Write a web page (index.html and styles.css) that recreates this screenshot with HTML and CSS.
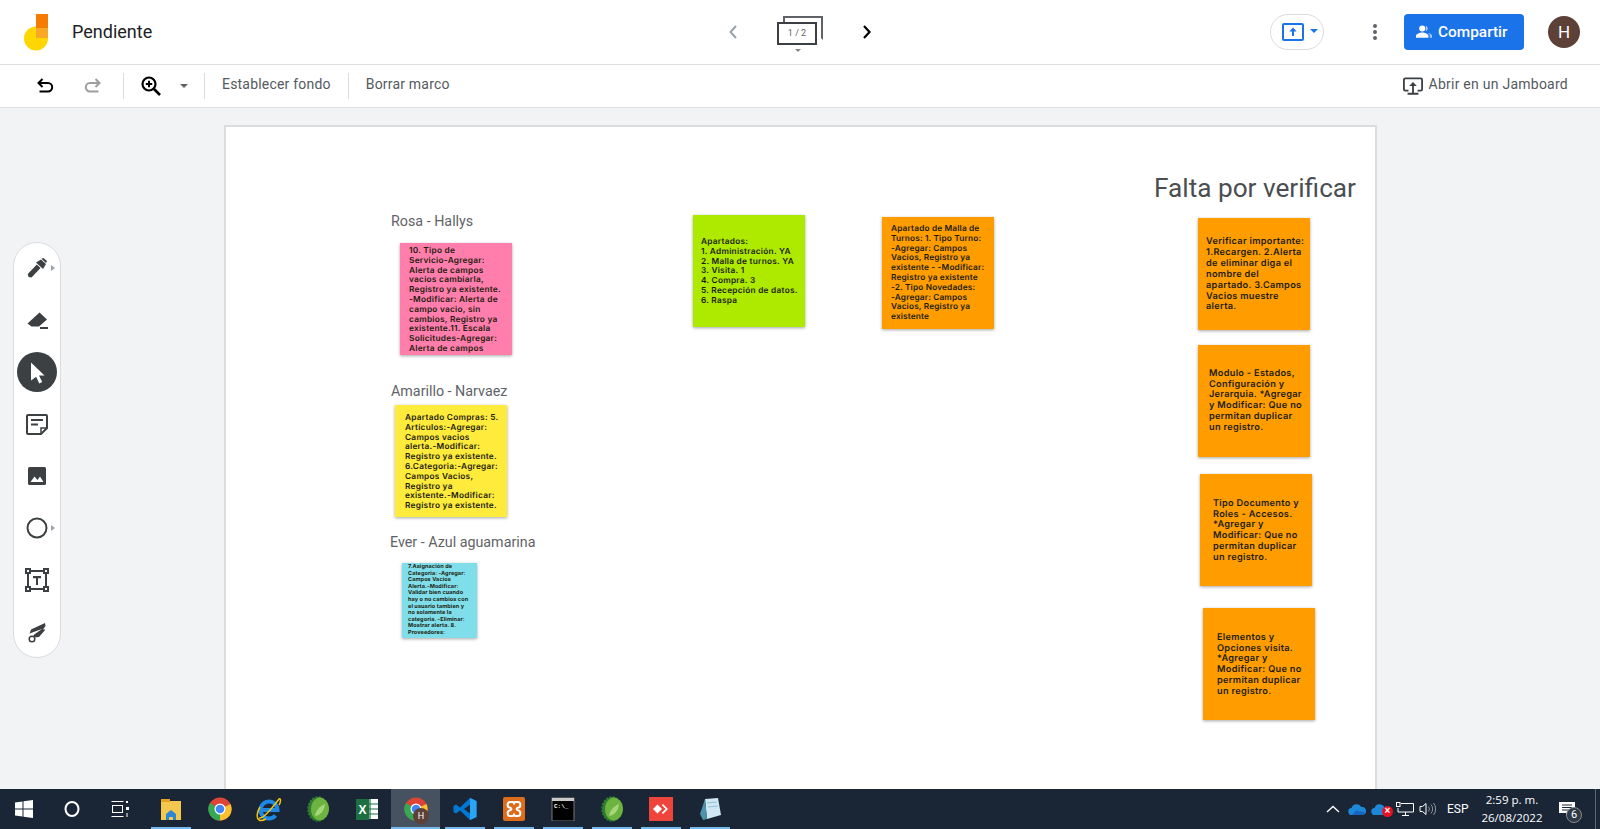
FILE: index.html
```html
<!DOCTYPE html>
<html lang="es">
<head>
<meta charset="utf-8">
<title>Pendiente - Jamboard</title>
<link rel="stylesheet" href="styles.css">
</head>
<body>
<div class="app">
  <header class="topbar">
    <svg class="logo" width="24" height="37" viewBox="0 0 24 37"><circle cx="12" cy="24.5" r="12" fill="#ffd600"/><rect x="12" y="0" width="12" height="14" fill="#f57c00"/><rect x="12" y="14" width="12" height="10" fill="#f9a825"/></svg>
    <div class="doc-title">Pendiente</div>
    <div class="pager">
      <svg class="pg-chev" width="12" height="16" viewBox="0 0 12 16"><path d="M9 2 3.500 8 9 14" fill="none" stroke="#9aa0a6" stroke-width="2"/></svg>
      <div class="stack">
        <div class="stack-back"></div>
        <div class="stack-front">1 / 2</div>
        <div class="stack-caret"></div>
      </div>
      <svg class="pg-chev" width="12" height="16" viewBox="0 0 12 16"><path d="M3 2 8.500 8 3 14" fill="none" stroke="#000" stroke-width="2.200"/></svg>
    </div>
    <div class="top-right">
      <div class="present">
        <svg width="22" height="18" viewBox="0 0 22 18"><rect x="1" y="1" width="20" height="16" rx="1" fill="none" stroke="#1a73e8" stroke-width="2"/><path d="M11 4.500 7.300 8.500H10V13h2V8.500h2.700z" fill="#1a73e8"/></svg>
        <span class="present-caret"></span>
      </div>
      <svg class="kebab" width="4" height="16" viewBox="0 0 4 16"><circle cx="2" cy="2" r="2" fill="#5f6368"/><circle cx="2" cy="8" r="2" fill="#5f6368"/><circle cx="2" cy="14" r="2" fill="#5f6368"/></svg>
      <button class="share">
        <svg width="16" height="13" viewBox="0 0 18 14"><circle cx="7" cy="3.600" r="3.400" fill="#fff"/><path d="M0 14v-2c0-2.600 4.400-4 7-4s7 1.400 7 4v2z" fill="#fff"/><path d="M11 .4a3.400 3.400 0 0 1 0 6.400zM13 8.300c2.400.4 5 1.600 5 3.700v2h-2.500v-2.500c0-1.300-1.100-2.400-2.500-3.200z" fill="#a8c7fa"/></svg>
        <span>Compartir</span>
      </button>
      <div class="avatar">H</div>
    </div>
  </header>

  <div class="toolbar">
    <svg class="tb-undo" width="24" height="24" viewBox="0 0 24 24"><path d="M9.500 5 5.500 9l4 4M5.500 9H15a4.200 4.200 0 0 1 0 8.400H6.500" fill="none" stroke="#000" stroke-width="2"/></svg>
    <svg class="tb-redo" width="24" height="24" viewBox="0 0 24 24"><path d="M14.500 5l4 4-4 4M18.500 9H9a4.200 4.200 0 0 0 0 8.400h8.500" fill="none" stroke="#9e9e9e" stroke-width="2"/></svg>
    <div class="tb-sep tb-sep-1"></div>
    <svg class="tb-zoom" width="24" height="24" viewBox="0 0 24 24"><circle cx="10" cy="10" r="6.500" fill="none" stroke="#000" stroke-width="2.200"/><path d="M15 15l6 6" stroke="#000" stroke-width="2.600"/><path d="M10 6.800v6.400M6.800 10h6.400" stroke="#000" stroke-width="2"/></svg>
    <span class="tb-caret"></span>
    <div class="tb-sep tb-sep-2"></div>
    <div class="tb-text">Establecer fondo</div>
    <div class="tb-sep tb-sep-3"></div>
    <div class="tb-text">Borrar marco</div>
    <div class="open-in">
      <svg width="20" height="19" viewBox="0 0 22 20"><path d="M6 14.500H2.500a1.500 1.500 0 0 1-1.500-1.500V2.500A1.500 1.500 0 0 1 2.500 1h17A1.500 1.500 0 0 1 21 2.500V13a1.500 1.500 0 0 1-1.500 1.500H16" fill="none" stroke="#3c4043" stroke-width="2"/><path d="M11 5 6.800 9.500H10V17H5v2h12v-2h-5V9.500h3.200z" fill="#3c4043"/></svg>
      <span>Abrir en un Jamboard</span>
    </div>
  </div>

  <main class="stage">
    <div class="canvas">
      <div class="label label-rosa">Rosa - Hallys</div>
      <div class="note note-pink">10. Tipo de<br>Servicio-Agregar:<br>Alerta de campos<br>vacios cambiarla,<br>Registro ya existente.<br>-Modificar: Alerta de<br>campo vacio, sin<br>cambios, Registro ya<br>existente.11. Escala<br>Solicitudes-Agregar:<br>Alerta de campos</div>
      <div class="label label-amarillo">Amarillo - Narvaez</div>
      <div class="note note-yellow">Apartado Compras: 5.<br>Articulos:-Agregar:<br>Campos vacios<br>alerta.-Modificar:<br>Registro ya existente.<br>6.Categoria:-Agregar:<br>Campos Vacios,<br>Registro ya<br>existente.-Modificar:<br>Registro ya existente.</div>
      <div class="label label-ever">Ever - Azul aguamarina</div>
      <div class="note note-cyan">7.Asignación de<br>Categoria: -Agregar:<br>Campos Vacios<br>Alerta.-Modificar:<br>Validar bien cuando<br>hay o no cambios con<br>el usuario tambien y<br>no solamente la<br>categoria. -Eliminar:<br>Mostrar alerta. 8.<br>Proveedores:</div>
      <div class="note note-green">Apartados:<br>1. Administración. YA<br>2. Malla de turnos. YA<br>3. Visita. 1<br>4. Compra. 3<br>5. Recepción de datos.<br>6. Raspa</div>
      <div class="note note-orange note-malla">Apartado de Malla de<br>Turnos: 1. Tipo Turno:<br>-Agregar: Campos<br>Vacios, Registro ya<br>existente - -Modificar:<br>Registro ya existente<br>-2. Tipo Novedades:<br>-Agregar: Campos<br>Vacios, Registro ya<br>existente</div>
      <div class="heading">Falta por verificar</div>
      <div class="note note-orange note-big note-verificar">Verificar importante:<br>1.Recargen. 2.Alerta<br>de eliminar diga el<br>nombre del<br>apartado. 3.Campos<br>Vacios muestre<br>alerta.</div>
      <div class="note note-orange note-big note-modulo">Modulo - Estados,<br>Configuración y<br>Jerarquia. *Agregar<br>y Modificar: Que no<br>permitan duplicar<br>un registro.</div>
      <div class="note note-orange note-big note-tipo">Tipo Documento y<br>Roles - Accesos.<br>*Agregar y<br>Modificar: Que no<br>permitan duplicar<br>un registro.</div>
      <div class="note note-orange note-big note-elementos">Elementos y<br>Opciones visita.<br>*Agregar y<br>Modificar: Que no<br>permitan duplicar<br>un registro.</div>
    </div>

    <nav class="rail">
      <div class="tool">
        <svg width="24" height="24" viewBox="0 0 24 24"><path d="M3.500 21 2.800 18l9-9.500 3.700 3.500-9 9.500z" fill="#3c4043"/><path d="M11 6.500 16 3.500l5 4.500-3 5z" fill="#3c4043"/><path d="M16.500 2.800l2-.8 3.500 3-1 2z" fill="#3c4043"/></svg>
        <span class="tool-more"></span>
      </div>
      <div class="tool">
        <svg width="24" height="24" viewBox="0 0 24 24"><path d="M15.500 3.500 23 10.500 15 17.500H7.500L3.500 14.500z" fill="#3c4043" transform="translate(-1 1)"/><rect x="15" y="19" width="8" height="2" fill="#3c4043"/></svg>
      </div>
      <div class="tool tool-active">
        <svg width="24" height="24" viewBox="0 0 24 24"><path d="M6 2.500 19.500 15.500H14l3.200 6.500-3 1.400-3-6.700L6 20.500z" fill="#fff"/></svg>
      </div>
      <div class="tool">
        <svg width="24" height="24" viewBox="0 0 24 24"><path d="M3 3h18a1 1 0 0 1 1 1v12l-6 6H3a1 1 0 0 1-1-1V4a1 1 0 0 1 1-1z" fill="none" stroke="#3c4043" stroke-width="2"/><path d="M6 8h12M6 12.500h7" stroke="#3c4043" stroke-width="2"/><path d="M16 21v-5h5.500" fill="none" stroke="#3c4043" stroke-width="1.500"/></svg>
      </div>
      <div class="tool">
        <svg width="24" height="24" viewBox="0 0 24 24"><rect x="3" y="3" width="18" height="18" rx="1.500" fill="#3c4043"/><path d="M5.500 18 9.500 12.500l3 3.500 2.500-3.500 3.500 5.500z" fill="#fff"/></svg>
      </div>
      <div class="tool">
        <svg width="24" height="24" viewBox="0 0 24 24"><circle cx="12" cy="12" r="9.500" fill="none" stroke="#3c4043" stroke-width="2"/></svg>
        <span class="tool-more"></span>
      </div>
      <div class="tool">
        <svg width="24" height="24" viewBox="0 0 24 24"><path d="M3 3h18v18H3z" fill="none" stroke="#3c4043" stroke-width="2"/><g fill="#fff" stroke="#3c4043" stroke-width="2"><rect x="1" y="1" width="4" height="4"/><rect x="19" y="1" width="4" height="4"/><rect x="1" y="19" width="4" height="4"/><rect x="19" y="19" width="4" height="4"/></g><path d="M8 8h8v2.200h-3V17h-2v-6.800H8z" fill="#3c4043"/></svg>
      </div>
      <div class="tool">
        <svg width="24" height="24" viewBox="0 0 24 24"><path d="M20 3 6 9.500 4.500 13.500 17 9 8.500 15 9 17.500 14 17 20.500 9.500 18 9.500 20.500 6z" fill="#3c4043"/><circle cx="7" cy="19" r="2.800" fill="#fff" stroke="#3c4043" stroke-width="1.500"/></svg>
      </div>
    </nav>
  </main>

  <footer class="taskbar">
    <div class="tb-sys">
      <svg width="18" height="18" viewBox="0 0 18 18"><path d="M0 2.500 7.500 1.400V8.500H0zM8.500 1.300 18 0v8.500H8.500zM0 9.500H7.500V16.600L0 15.500zM8.500 9.500H18V18L8.500 16.700z" fill="#fff"/></svg>
    </div>
    <div class="tb-sys">
      <svg width="18" height="18" viewBox="0 0 18 18"><ellipse cx="9" cy="9" rx="6.500" ry="7" fill="none" stroke="#fff" stroke-width="2"/></svg>
    </div>
    <div class="tb-sys">
      <svg width="18" height="18" viewBox="0 0 18 18"><g fill="none" stroke="#fff"><path d="M.5 1.500h12M.5 16.500h12"/><rect x="1.500" y="5.500" width="10" height="7"/></g><g fill="#fff"><rect x="15" y="1" width="2" height="2"/><rect x="15" y="7" width="3" height="3"/><rect x="15.500" y="13" width="1" height="4"/></g></svg>
    </div>
    <div class="apps">
      <div class="app-item app-open">
        <svg width="24" height="24" viewBox="0 0 24 24"><path d="M2 2h8l1 2h11v19H2z" fill="#f4c74f"/><rect x="2" y="2" width="9" height="3" fill="#e5a320"/><path d="M7 23v-6h10v6h-3v-3h-4v3z" fill="#2b87d3"/><path d="M7 17l5-4 5 4z" fill="#2b87d3"/></svg>
      </div>
      <div class="app-item">
        <svg width="24" height="24" viewBox="0 0 24 24"><circle cx="12" cy="12" r="11.500" fill="#db4437"/><path d="M12 12 22.500 7A11.500 11.500 0 0 1 12 23.500z" fill="#fbc02d"/><path d="M12 12 12 23.500A11.500 11.500 0 0 1 2 6z" fill="#34a853"/><circle cx="12" cy="12" r="5.500" fill="#fff"/><circle cx="12" cy="12" r="4.300" fill="#4285f4"/></svg>
      </div>
      <div class="app-item">
        <svg width="26" height="26" viewBox="0 0 26 26"><path d="M4.500 14H21.500A8.500 8.500 0 1 0 19.500 19.500" fill="none" stroke="#1e88e5" stroke-width="4"/><path d="M3 22C6 23 14 15 23 3 25 2 25 6 23 9" fill="none" stroke="#f1c40f" stroke-width="1.500"/><path d="M4 11C1 16 0 22 3 24 5 25 8 24 10 23" fill="none" stroke="#f1c40f" stroke-width="1.500"/></svg>
      </div>
      <div class="app-item">
        <svg width="24" height="26" viewBox="0 0 24 26"><ellipse cx="12" cy="13" rx="10" ry="12" fill="#2e7d32" stroke="#2e7d32" stroke-width="1.500" stroke-dasharray="2 1.500"/><path d="M14 1.500c6 1 9 6 9 11.500s-4 11-9 11.500c-5 0-9-5-9-11.500S9 2 14 1.500z" fill="#6db33f"/><path d="M9 20c1-6 5-10 10-12-1 7-4 11-10 12z" fill="#a5d67a"/></svg>
      </div>
      <div class="app-item">
        <svg width="24" height="24" viewBox="0 0 24 24"><rect x="8" y="2" width="15" height="20" fill="#fff"/><path d="M15 2v20M8 7h15M8 12h15M8 17h15" stroke="#1d6f42" stroke-width="1.200"/><rect x="1" y="2" width="13" height="21" fill="#1d6f42"/><text class="xl-glyph" x="7.500" y="17" text-anchor="middle">X</text></svg>
      </div>
      <div class="app-item app-active app-open">
        <svg width="24" height="24" viewBox="0 0 24 24"><circle cx="12" cy="12" r="11.500" fill="#db4437"/><path d="M12 12 22.500 7A11.500 11.500 0 0 1 12 23.500z" fill="#fbc02d"/><path d="M12 12 12 23.500A11.500 11.500 0 0 1 2 6z" fill="#34a853"/><circle cx="12" cy="12" r="5.500" fill="#fff"/><circle cx="12" cy="12" r="4.300" fill="#4285f4"/></svg>
        <span class="chrome-badge">H</span>
      </div>
      <div class="app-item app-open">
        <svg width="24" height="24" viewBox="0 0 24 24"><path d="M17 1 23.500 4v16L17 23 7 13.500l-4 3-2.500-1.500v-6L3 7.500l4 3z" fill="#0078d4"/><path d="M17 1 23.500 4v16L17 23z" fill="#2aa4f4"/><path d="M17 7.500 11 12l6 4.500z" fill="#1a2636"/></svg>
      </div>
      <div class="app-item app-open">
        <svg width="24" height="24" viewBox="0 0 24 24"><rect x="1" y="0" width="22" height="24" rx="2" fill="#dc6d1c"/><path d="M8 5h2.500c1 0 1.500 1.500 1.500 2.500C12 6.500 12.500 5 13.500 5H16c3 0 3 5 .5 5.500-1 .2-2 .5-2 1.500s1 1.300 2 1.500c2.500.5 2.500 5.500-.5 5.500h-2.500c-1 0-1.500-1.500-1.500-2.500 0 1-.5 2.500-1.500 2.500H8c-3 0-3-5-.5-5.500 1-.2 2-.5 2-1.500s-1-1.300-2-1.500C5 10 5 5 8 5z" fill="none" stroke="#fff" stroke-width="2"/></svg>
      </div>
      <div class="app-item app-open">
        <svg width="24" height="24" viewBox="0 0 24 24"><rect x="1" y="1" width="22" height="23" fill="#000" stroke="#777"/><rect x="1" y="1" width="22" height="3" fill="#c9c9c9"/><text class="cmd-glyph" x="3" y="11">C:\_</text></svg>
      </div>
      <div class="app-item app-open">
        <svg width="24" height="26" viewBox="0 0 24 26"><ellipse cx="12" cy="13" rx="10" ry="12" fill="#2e7d32" stroke="#2e7d32" stroke-width="1.500" stroke-dasharray="2 1.500"/><path d="M14 1.500c6 1 9 6 9 11.500s-4 11-9 11.500c-5 0-9-5-9-11.500S9 2 14 1.500z" fill="#6db33f"/><path d="M9 20c1-6 5-10 10-12-1 7-4 11-10 12z" fill="#a5d67a"/></svg>
      </div>
      <div class="app-item app-open">
        <svg width="24" height="24" viewBox="0 0 24 24"><rect width="24" height="24" fill="#ef443b"/><path d="M8.500 7.500 13 12l-4.500 4.500L4 12z" fill="#fff"/><path d="M14 7l5 5-5 5-1.200-1.200L16.600 12l-3.800-3.800z" fill="#fff"/></svg>
      </div>
      <div class="app-item app-open">
        <svg width="24" height="24" viewBox="0 0 24 24"><path d="M7 2 20 1l3 17-14 4z" fill="#cfe8f3"/><path d="M2 17 7 2l2 20-4 1z" fill="#4f93a8"/><path d="M9 6l10-1M10 10l10-1" stroke="#8fc1d6"/></svg>
      </div>
    </div>
    <div class="tray">
      <svg class="tray-chev" width="14" height="8" viewBox="0 0 14 8"><path d="M1 7 7 1.500 13 7" fill="none" stroke="#fff" stroke-width="1.300"/></svg>
      <svg class="tray-cloud" width="18" height="12" viewBox="0 0 18 12"><path d="M4 12a3.500 3.500 0 0 1-.5-7A5.500 5.500 0 0 1 13.500 4 4 4 0 0 1 14.500 12z" fill="#1e88d8"/><path d="M4 12 8 7.500 17 9.500A4 4 0 0 1 14.500 12z" fill="#1565c0"/></svg>
      <div class="cloud-err">
        <svg width="18" height="12" viewBox="0 0 18 12"><path d="M4 12a3.500 3.500 0 0 1-.5-7A5.500 5.500 0 0 1 13.500 4 4 4 0 0 1 14.500 12z" fill="#1e88d8"/></svg>
        <span class="err-dot">×</span>
      </div>
      <svg class="tray-net" width="18" height="14" viewBox="0 0 18 14"><g fill="none" stroke="#fff"><path d="M5 1.500H17.500V10H2V6"/><path d="M9.500 10v3M6 13.500h7"/><rect x=".5" y=".5" width="3.500" height="4"/></g></svg>
      <svg class="tray-vol" width="18" height="14" viewBox="0 0 18 14"><path d="M1 4.500h2.500L7 1.500v11L3.500 9.500H1z" fill="none" stroke="#fff"/><path d="M9.500 4.500a4 4 0 0 1 0 5M12 2.500a7 7 0 0 1 0 9M14.500 1a9.500 9.500 0 0 1 0 12" fill="none" stroke="#8d95a0"/></svg>
      <span class="tray-lang">ESP</span>
      <div class="clock"><span>2:59 p. m.</span><span>26/08/2022</span></div>
      <div class="notif">
        <svg width="16" height="14" viewBox="0 0 16 14"><path d="M0 0h16v11H9l-2 3v-3H0z" fill="#fff"/><path d="M3 3h10M3 5.500h10M3 8h7" stroke="#1a2636" stroke-width="1"/></svg>
        <span class="notif-badge">6</span>
      </div>
      <div class="tray-edge"></div>
    </div>
  </footer>
</div>
</body>
</html>
```

FILE: styles.css
```css
* { box-sizing: border-box; }
html, body { margin: 0; height: 100%; overflow: hidden; }
body { font-family: Roboto, "Liberation Sans", sans-serif; color: #3c4043; background: #fff; }
svg { display: block; flex: none; }

.app { display: flex; flex-direction: column; height: 829px; }

/* top bar */
.topbar { position: relative; display: flex; align-items: center; flex: none; height: 65px; padding: 0 20px 1px 24px; border-bottom: 1px solid #e0e0e0; background: #fff; }
.logo { margin-top: 1px; }
.doc-title { margin-left: 24px; font-size: 18px; color: #202124; }
.pager { position: absolute; left: 727px; top: 15px; display: flex; align-items: flex-start; }
.pg-chev { margin-top: 9px; }
.stack { position: relative; width: 46px; height: 36px; margin: 0 38px; }
.stack-back { position: absolute; left: 6px; top: 1px; width: 40px; height: 24px; border: 2px solid #5f6368; border-bottom-color: transparent; }
.stack-front { position: absolute; left: 0; top: 7px; width: 40px; height: 23px; border: 2px solid #3c4043; background: #fff; font-size: 9px; line-height: 19px; text-align: center; color: #5f6368; }
.stack-caret { position: absolute; left: 18px; top: 34px; border: 3.5px solid transparent; border-top: 3.5px solid #80868b; }
.top-right { display: flex; align-items: center; margin-left: auto; }
.present { display: flex; align-items: center; width: 54px; height: 36px; padding-left: 11px; border: 1px solid #dadce0; border-radius: 18px; }
.present-caret { margin: 3px 0 0 6px; border: 4px solid transparent; border-top: 4px solid #1a73e8; }
.kebab { margin: 0 27px 0 49px; }
.share { display: flex; align-items: center; width: 120px; height: 36px; padding: 0 0 0 12px; border: 0; border-radius: 4px; background: #1a73e8; color: #fff; font: 500 15.4px Roboto, sans-serif; }
.share span { margin-left: 6px; }
.avatar { width: 32px; height: 32px; margin-left: 24px; border-radius: 50%; background: #5d4037; color: #fff; font-size: 17px; line-height: 32px; text-align: center; }

/* toolbar */
.toolbar { display: flex; align-items: center; flex: none; height: 43px; padding: 0 32px 0 33px; border-bottom: 1px solid #e0e0e0; background: #fff; }
.tb-redo { margin-left: 24px; }
.tb-sep { width: 1px; height: 26px; background: #dadce0; }
.tb-sep-1 { margin-left: 18px; }
.tb-zoom { margin-left: 15px; }
.tb-caret { margin: 3px 0 0 17px; border: 4px solid transparent; border-top: 4px solid #5f6368; }
.tb-sep-2 { margin-left: 16px; }
.tb-text { padding: 0 17px 4px 17px; font-size: 14px; letter-spacing: .2px; color: #55595e; }
.open-in { display: flex; align-items: center; margin-left: auto; font-size: 14px; letter-spacing: .25px; color: #55595e; }
.open-in span { margin-left: 6px; padding-bottom: 4px; }

/* stage */
.stage { position: relative; flex: 1; min-height: 0; padding: 17px 223px 0 224px; overflow: hidden; background: #f1f3f4; }
.canvas { position: relative; height: 760px; border: 2px solid #dadce0; background: #fff; }

.label { position: absolute; font-size: 14.3px; line-height: 18px; white-space: nowrap; color: #5f6368; }
.label-rosa { left: 165px; top: 85px; }
.label-amarillo { left: 165px; top: 255px; }
.label-ever { left: 164px; top: 406px; }
.heading { position: absolute; left: 928px; top: 44px; font-size: 26.2px; line-height: 34px; white-space: nowrap; color: #4a4e52; }

.note { position: absolute; width: 112px; height: 112px; box-shadow: 0 1px 3px rgba(0,0,0,.35); font-family: Inter, "Noto Sans", sans-serif; font-size: 8.3px; font-weight: 600; letter-spacing: .25px; line-height: 9.8px; white-space: nowrap; text-rendering: geometricPrecision; color: #1c1c10; }
.note-pink { left: 174px; top: 116px; padding: 4px 0 0 9px; background: #ff7eab; }
.note-yellow { left: 169px; top: 278px; padding: 9px 0 0 10px; background: #ffeb3b; }
.note-cyan { left: 176px; top: 436px; width: 75px; height: 75px; padding: 1px 0 0 6px; background: #80deea; font-size: 5.5px; font-weight: 700; letter-spacing: .1px; line-height: 6.6px; }
.note-green { left: 467px; top: 88px; padding: 23px 0 0 8px; background: #aeea00; }
.note-orange { background: #ff9d00; }
.note-malla { left: 656px; top: 90px; padding: 8px 0 0 9px; letter-spacing: .15px; }
.note-big { font-size: 9.2px; letter-spacing: .3px; line-height: 10.7px; }
.note-verificar { left: 972px; top: 91px; padding: 19px 0 0 8px; line-height: 10.9px; }
.note-modulo { left: 972px; top: 218px; padding: 24px 0 0 11px; }
.note-tipo { left: 974px; top: 347px; padding: 25px 0 0 13px; }
.note-elementos { left: 977px; top: 481px; padding: 25px 0 0 14px; }

/* left rail */
.rail { position: absolute; left: 13px; top: 134px; width: 48px; height: 416px; overflow: visible; border: 1px solid #dadce0; border-radius: 24px; background: #fff; }
.tool { position: relative; display: flex; align-items: center; justify-content: center; height: 52px; }
.tool:first-child { margin-top: -1px; }
.tool-active::before { content: ""; position: absolute; left: 3px; top: 6px; width: 40px; height: 40px; border-radius: 50%; background: #3c4043; }
.tool-active svg { position: relative; }
.tool-more { position: absolute; right: 2px; top: 23px; border: 3px solid transparent; border-left: 4px solid #9aa0a6; }

/* taskbar */
.taskbar { display: flex; align-items: center; flex: none; height: 40px; background: #1a2636; color: #fff; }
.tb-sys { display: flex; align-items: center; justify-content: center; flex: none; width: 48px; height: 40px; }
.apps { display: flex; margin-left: 2px; }
.app-item { position: relative; display: flex; align-items: center; justify-content: center; flex: none; width: 49px; height: 40px; }
.app-open::after { content: ""; position: absolute; left: 5px; right: 4px; bottom: 0; height: 2px; background: #76b9ed; }
.app-active { background: #475260; }
.app-active::after { left: 0; right: 0; }
.xl-glyph { font: 700 12px "Liberation Sans", sans-serif; fill: #fff; }
.cmd-glyph { font: 700 6px "Liberation Mono", monospace; fill: #fff; }
.chrome-badge { position: absolute; left: 22px; top: 19px; width: 16px; height: 16px; border-radius: 50%; background: #5d4037; color: #fff; font-size: 9px; line-height: 16px; text-align: center; }

.tray { display: flex; align-items: center; height: 40px; margin-left: auto; }
.tray-chev { margin-right: 8px; }
.cloud-err { position: relative; margin-left: 5px; }
.err-dot { position: absolute; right: -4px; top: 3px; width: 11px; height: 11px; border-radius: 50%; background: #e81123; color: #fff; font: 700 10px/10px "Liberation Sans", sans-serif; text-align: center; }
.tray-net { margin-left: 7px; }
.tray-vol { margin-left: 5px; }
.tray-lang { width: 22px; margin-left: 10px; font-size: 12px; white-space: nowrap; color: #fff; }
.clock { display: flex; flex-direction: column; align-items: center; width: 70px; margin-left: 8px; font-family: "Open Sans", "Noto Sans", sans-serif; font-size: 11.5px; line-height: 18px; color: #fff; }
.notif { position: relative; width: 20px; margin-left: 12px; }
.notif-badge { position: absolute; left: 7px; top: 5px; width: 16px; height: 16px; border: 1px solid #888; border-radius: 50%; background: #2f3a48; color: #fff; font-size: 11px; line-height: 14px; text-align: center; }
.tray-edge { width: 1px; height: 40px; margin-left: 16px; margin-right: 4px; background: #5b6470; }
```
